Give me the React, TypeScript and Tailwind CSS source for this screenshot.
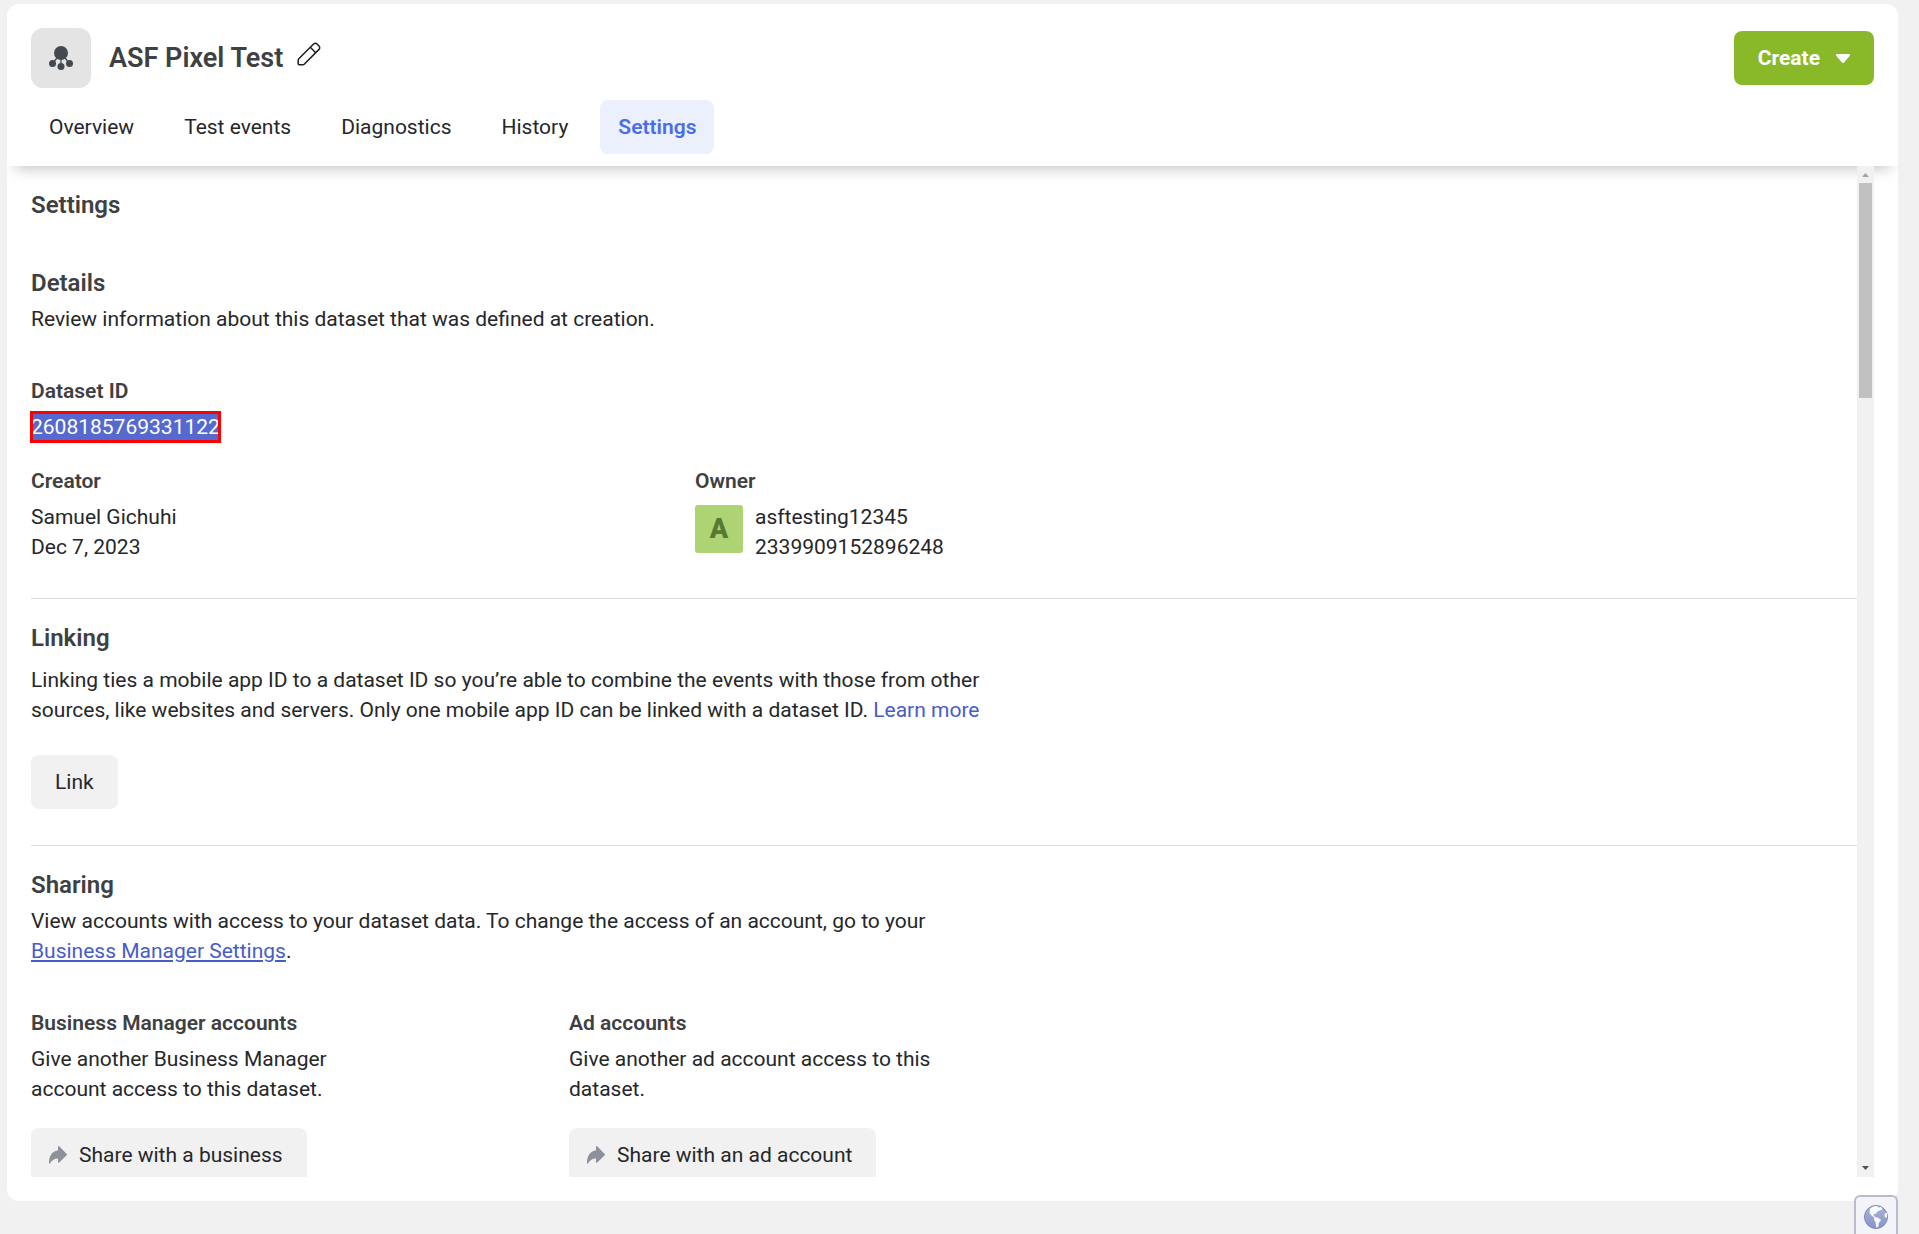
import type { ReactNode } from "react";

const tabs = ["Overview", "Test events", "Diagnostics", "History", "Settings"];

const tab = "h-[54px] rounded-lg px-[18px]";
const activeTab = "bg-[#ecf0fd] font-semibold text-[#4a6ee8]";

function DatasetIcon() {
  return (
    <svg viewBox="0 0 24 24" className="size-6" fill="#444950" stroke="#444950" aria-hidden>
      <path d="M12 7L3.5 17.5M12 7l8.5 10.5M12 7v13" strokeWidth="1.3" fill="none" />
      <circle cx="12" cy="7" r="7" stroke="none" />
      <circle cx="3.5" cy="17.5" r="3.5" stroke="none" />
      <circle cx="20.5" cy="17.5" r="3.5" stroke="none" />
      <circle cx="12" cy="20.5" r="3.5" stroke="none" />
    </svg>
  );
}

function PencilIcon() {
  return (
    <svg viewBox="0 0 24 24" className="size-6" fill="none" stroke="#1c1e21" strokeWidth="1.5" strokeLinejoin="round" aria-hidden>
      <path d="M1.200 18.200c0-.5.2-1 .6-1.400L16.600 2a2.400 2.400 0 0 1 3.400 0l2 2a2.400 2.400 0 0 1 0 3.400L7.200 22.200c-.4.4-.9.6-1.400.6H2.200a1 1 0 0 1-1-1z" />
      <path d="M13.300 5.300l5.400 5.400" />
    </svg>
  );
}

function ShareIcon() {
  return (
    <svg viewBox="0 0 18 18" className="size-[18px]" fill="#8d919c" aria-hidden>
      <path d="M9 .8c0-.7.7-1 1.200-.5l7.500 7.600c.4.4.4.9 0 1.300l-7.500 7.200c-.5.5-1.200.2-1.200-.5v-3.400c-3.600 0-6 1.400-8 4.900-.3.6-1 .4-1-.3C0 10.200 3.200 5 9 4.600z" />
    </svg>
  );
}

function GlobeIcon() {
  return (
    <svg viewBox="0 0 24 24" className="size-6" aria-hidden>
      <defs>
        <linearGradient id="sea" x1="0" y1="0" x2="0" y2="1">
          <stop offset="0" stopColor="#a9b4db" />
          <stop offset="1" stopColor="#8793c8" />
        </linearGradient>
      </defs>
      <circle cx="12" cy="12" r="11.500" fill="url(#sea)" stroke="#7d88b8" strokeWidth="1" />
      <path d="M6 3.500L10 1.300l3-.3 1.500 1.500 2.500-.5 1.500 2-2 1.200-2.500.8-2.500 3-2 .2.500 1.800 2 1.500-1 .4-3-2-2.500-3z" fill="#f9fafd" />
      <path d="M10.300 12.500l2.700-.3 3.500 2 .3 1.500-2 2-.3 3.500-1.500 1.600-1-.8-.3-4.500-1.700-2.800z" fill="#f9fafd" />
      <path d="M23 7.800l-1.800.4-.9 1.600.5 2.200 2.200 1z" fill="#f9fafd" />
    </svg>
  );
}

function Heading({ children }: { children: ReactNode }) {
  return <h2 className="text-2xl leading-[30px] font-semibold text-[#3e4042]">{children}</h2>;
}

function Label({ children }: { children: ReactNode }) {
  return <h3 className="mb-1.5 font-semibold text-[#3e4042]">{children}</h3>;
}

function ShareButton({ children }: { children: ReactNode }) {
  return (
    <button className="mt-6 flex h-[54px] items-center gap-3 rounded-lg bg-[#f1f1f1] pr-6 pl-[18px]">
      <ShareIcon />
      {children}
    </button>
  );
}

function Header() {
  return (
    <header className="shrink-0 px-6 pt-6 pb-3 shadow-[0_10px_14px_-8px_rgba(0,0,0,0.25)]">
      <div className="flex items-center justify-between">
        <div className="flex items-center">
          <span className="flex size-[60px] items-center justify-center rounded-xl bg-[#e4e4e4]">
            <DatasetIcon />
          </span>
          <h1 className="ml-[18px] text-[27px] leading-9 font-semibold text-[#3e4042]">ASF Pixel Test</h1>
          <button className="ml-[14px] pb-2" aria-label="Edit name">
            <PencilIcon />
          </button>
        </div>
        <button className="flex h-[54px] items-center gap-4 rounded-lg bg-[#89b928] px-6 font-bold text-white">
          Create
          <svg viewBox="0 0 14 9" className="h-[9px] w-[14px]" fill="#fff" aria-hidden>
            <path d="M1.200 0h11.600c1.100 0 1.600 1.200.8 2L8 8.400c-.6.700-1.400.7-2 0L.4 2C-.4 1.200.1 0 1.200 0z" />
          </svg>
        </button>
      </div>
      <nav className="mt-3 flex gap-[14px]">
        {tabs.map((name) => (
          <button key={name} className={`${tab} ${name === "Settings" ? activeTab : ""}`}>
            {name}
          </button>
        ))}
      </nav>
    </header>
  );
}

function Scrollbar() {
  return (
    <div className="flex w-[17px] shrink-0 flex-col items-center justify-between bg-[#f1f1f1]" aria-hidden>
      <div className="flex w-full flex-col items-center">
        <svg viewBox="0 0 17 17" className="size-[17px] shrink-0" fill="#a3a3a3">
          <path d="M5 11h7L8.500 7z" />
        </svg>
        <div className="h-[215px] w-[13px] bg-[#c1c1c1]" />
      </div>
      <svg viewBox="0 0 17 17" className="size-[17px] shrink-0" fill="#505050">
        <path d="M5 6h7l-3.500 4z" />
      </svg>
    </div>
  );
}

export default function App() {
  return (
    <div className="flex h-screen flex-col bg-[#f1f1f1] pt-1 pr-[21px] pb-[33px] pl-[7px] font-[Roboto,sans-serif] text-[21px] leading-[30px] text-[#25272a]">
      <div className="flex min-h-0 flex-1 flex-col overflow-hidden rounded-xl bg-white">
        <Header />
        <div className="mr-6 mb-6 flex min-h-0 flex-1">
          <main className="min-w-0 flex-1 overflow-hidden pt-6 pl-6">
            <Heading>Settings</Heading>

            <section className="mt-12 border-b border-[#dadde1] pb-9">
              <Heading>Details</Heading>
              <p className="mt-1.5 mb-[42px]">Review information about this dataset that was defined at creation.</p>
              <Label>Dataset ID</Label>
              <p className="mb-6 w-fit border-y border-transparent bg-[#5569d0] bg-clip-padding leading-7 text-white outline-3 -outline-offset-2 outline-[#ff0000]">
                2608185769331122
              </p>
              <div className="flex">
                <div className="w-[664px]">
                  <Label>Creator</Label>
                  <p>Samuel Gichuhi</p>
                  <p>Dec 7, 2023</p>
                </div>
                <div>
                  <Label>Owner</Label>
                  <div className="flex items-start gap-3 pt-[3px]">
                    <span className="flex size-12 items-center justify-center rounded-[3px] bg-[#aed373] text-[27px] font-black text-[#567a34]">
                      A
                    </span>
                    <div className="-mt-[3px]">
                      <p>asftesting12345</p>
                      <p>2339909152896248</p>
                    </div>
                  </div>
                </div>
              </div>
            </section>

            <section className="border-b border-[#dadde1] pt-6 pb-9">
              <Heading>Linking</Heading>
              <p className="mt-3 max-w-[960px]">
                Linking ties a mobile app ID to a dataset ID so you’re able to combine the events with those from other
                sources, like websites and servers. Only one mobile app ID can be linked with a dataset ID.{" "}
                <a href="#" className="text-[#465ccb]">
                  Learn more
                </a>
              </p>
              <button className="mt-[30px] h-[54px] rounded-lg bg-[#f1f1f1] px-6">Link</button>
            </section>

            <section className="pt-6">
              <Heading>Sharing</Heading>
              <p className="mt-1.5 mb-[42px] max-w-[960px]">
                View accounts with access to your dataset data. To change the access of an account, go to your{" "}
                <a href="#" className="text-[#465ccb] underline">
                  Business Manager Settings
                </a>
                .
              </p>
              <div className="flex">
                <div className="w-[538px]">
                  <Label>Business Manager accounts</Label>
                  <p className="max-w-[368px]">Give another Business Manager account access to this dataset.</p>
                  <ShareButton>Share with a business</ShareButton>
                </div>
                <div>
                  <Label>Ad accounts</Label>
                  <p className="max-w-[368px]">Give another ad account access to this dataset.</p>
                  <ShareButton>Share with an ad account</ShareButton>
                </div>
              </div>
            </section>
          </main>
          <Scrollbar />
        </div>
      </div>
      <button
        className="fixed right-[21px] bottom-0 flex h-[39px] w-11 justify-center rounded-t-md border-2 border-b-0 border-[#b9bdca] bg-[#f3f4f7] pt-2"
        aria-label="Language"
      >
        <GlobeIcon />
      </button>
    </div>
  );
}
